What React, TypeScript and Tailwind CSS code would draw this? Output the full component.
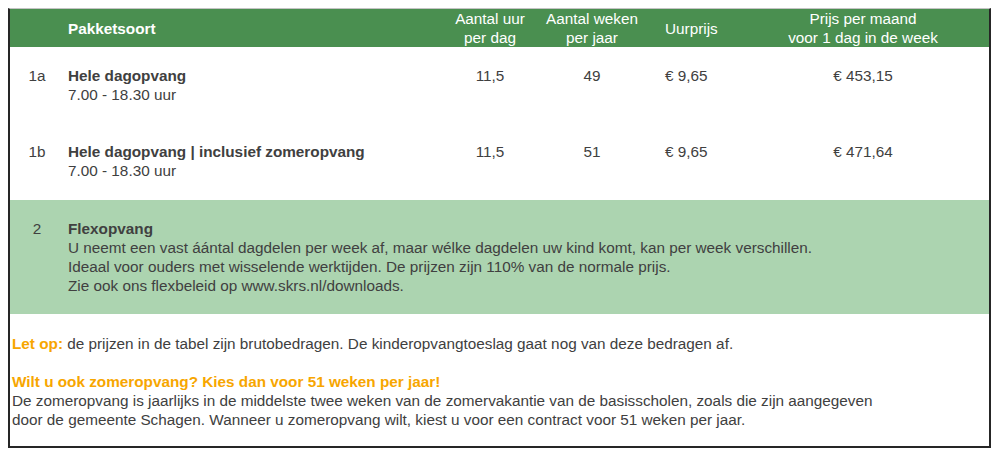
import React from 'react';

interface Pakket {
  nr: string;
  naam: string;
  tijden: string;
  uren: string;
  weken: string;
  uurprijs: string;
  maandprijs: string;
}

const pakketten: Pakket[] = [
  {
    nr: '1a',
    naam: 'Hele dagopvang',
    tijden: '7.00 - 18.30 uur',
    uren: '11,5',
    weken: '49',
    uurprijs: '€ 9,65',
    maandprijs: '€ 453,15',
  },
  {
    nr: '1b',
    naam: 'Hele dagopvang | inclusief zomeropvang',
    tijden: '7.00 - 18.30 uur',
    uren: '11,5',
    weken: '51',
    uurprijs: '€ 9,65',
    maandprijs: '€ 471,64',
  },
];

const cols = 'grid grid-cols-[54px_376px_100px_104px_121px_196px_1fr]';

export default function App() {
  return (
    <div className="min-h-screen bg-white p-2 font-['Liberation_Sans',Arial,sans-serif] text-[15.3px] leading-[19px] text-[#404040]">
      <div className="w-[983px] h-[440px] border-x-2 border-b-2 border-t border-x-[#262626] border-b-[#262626] border-t-[#c4c4c4] bg-white">
        {/* Header */}
        <div className={`${cols} h-[38px] bg-[#4a8f50] text-white items-center`}>
          <div />
          <div className="pl-1 font-bold">Pakketsoort</div>
          <div className="text-center">
            Aantal uur
            <br />
            per dag
          </div>
          <div className="text-center">
            Aantal weken
            <br />
            per jaar
          </div>
          <div className="pl-[21px]">Uurprijs</div>
          <div className="text-center">
            Prijs per maand
            <br />
            voor 1 dag in de week
          </div>
          <div />
        </div>

        {/* Rows */}
        {pakketten.map((p, i) => (
          <div key={p.nr} className={`${cols} pt-[19px] ${i === 0 ? 'pb-[19px]' : 'pb-[20px]'}`}>
            <div className="text-center">{p.nr}</div>
            <div className="pl-1">
              <div className="font-bold">{p.naam}</div>
              <div>{p.tijden}</div>
            </div>
            <div className="text-center">{p.uren}</div>
            <div className="text-center">{p.weken}</div>
            <div className="pl-[21px]">{p.uurprijs}</div>
            <div className="text-center">{p.maandprijs}</div>
            <div />
          </div>
        ))}

        {/* Flexopvang */}
        <div className={`${cols} bg-[#acd4b0] py-[19px]`}>
          <div className="text-center">2</div>
          <div className="col-span-6 pl-1">
            <div className="font-bold">Flexopvang</div>
            <div>U neemt een vast áántal dagdelen per week af, maar wélke dagdelen uw kind komt, kan per week verschillen.</div>
            <div>Ideaal voor ouders met wisselende werktijden. De prijzen zijn 110% van de normale prijs.</div>
            <div>Zie ook ons flexbeleid op www.skrs.nl/downloads.</div>
          </div>
        </div>

        {/* Notes */}
        <div className="pl-[2px] pt-[20px]">
          <p>
            <span className="font-bold text-[#f7a600]">Let op:</span> de prijzen in de tabel zijn brutobedragen. De kinderopvangtoeslag gaat nog van deze bedragen af.
          </p>
          <p className="mt-[19px] font-bold text-[#f7a600]">Wilt u ook zomeropvang? Kies dan voor 51 weken per jaar!</p>
          <p>
            De zomeropvang is jaarlijks in de middelste twee weken van de zomervakantie van de basisscholen, zoals die zijn aangegeven
            <br />
            door de gemeente Schagen. Wanneer u zomeropvang wilt, kiest u voor een contract voor 51 weken per jaar.
          </p>
        </div>
      </div>
    </div>
  );
}
